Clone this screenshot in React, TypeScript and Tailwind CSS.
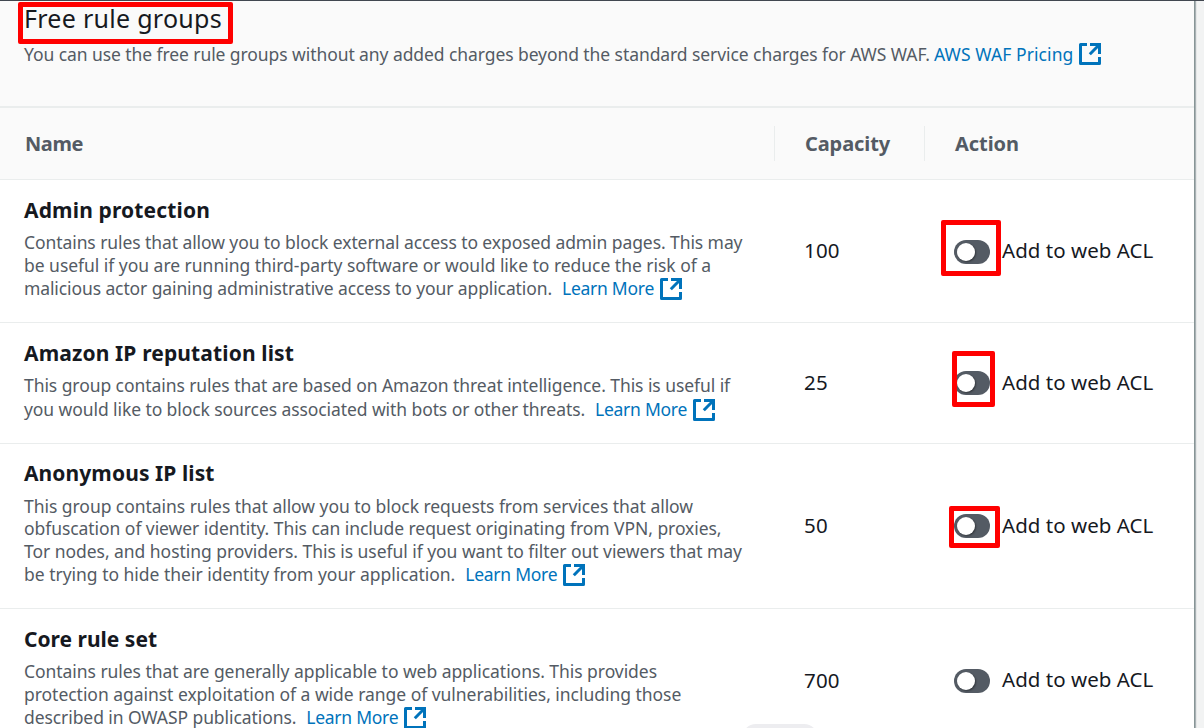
type TextLine = { text: string; className: string };

type RuleGroup = {
  name: string;
  nameClass: string;
  lines: TextLine[];
  linesClass: string;
  capacity: string;
  rowClass: string;
  toggleClass?: string;
  highlight?: string;
};

const groups: RuleGroup[] = [
  {
    name: "Admin protection",
    nameClass: "pt-4 tracking-[0.145px]",
    lines: [
      { text: "Contains rules that allow you to block external access to exposed admin pages. This may", className: "tracking-[-0.081px]" },
      { text: "be useful if you are running third-party software or would like to reduce the risk of a", className: "tracking-[-0.029px]" },
      { text: "malicious actor gaining administrative access to your application.", className: "tracking-[-0.108px]" },
    ],
    linesClass: "mt-[7px] auto-rows-[23px]",
    capacity: "100",
    rowClass: "h-[143px]",
    toggleClass: "mt-px",
    highlight: "-left-[13px] -top-[20px] h-[56px] w-[60px]",
  },
  {
    name: "Amazon IP reputation list",
    nameClass: "pt-4 tracking-[0.129px]",
    lines: [
      { text: "This group contains rules that are based on Amazon threat intelligence. This is useful if", className: "tracking-[-0.067px]" },
      { text: "you would like to block sources associated with bots or other threats.", className: "tracking-[-0.084px]" },
    ],
    linesClass: "mt-[7px] auto-rows-[23px] gap-px",
    capacity: "25",
    rowClass: "h-[121px]",
    highlight: "-left-[2px] -top-[20px] h-[56px] w-[43px]",
  },
  {
    name: "Anonymous IP list",
    nameClass: "pt-[15px] tracking-[0.085px]",
    lines: [
      { text: "This group contains rules that allow you to block requests from services that allow", className: "tracking-[-0.043px]" },
      { text: "obfuscation of viewer identity. This can include request originating from VPN, proxies,", className: "tracking-[-0.06px]" },
      { text: "Tor nodes, and hosting providers. This is useful if you want to filter out viewers that may", className: "tracking-[-0.044px]" },
      { text: "be trying to hide their identity from your application.", className: "tracking-[-0.016px]" },
    ],
    linesClass: "mt-2 grid-rows-[22px_23px_23px_23px]",
    capacity: "50",
    rowClass: "h-[165px]",
    highlight: "-left-[5px] -top-[8px] h-[42px] w-[51px]",
  },
  {
    name: "Core rule set",
    nameClass: "pt-4 tracking-normal",
    lines: [
      { text: "Contains rules that are generally applicable to web applications. This provides", className: "tracking-[-0.052px]" },
      { text: "protection against exploitation of a wide range of vulnerabilities, including those", className: "tracking-[-0.035px]" },
      { text: "described in OWASP publications.", className: "tracking-[-0.08px]" },
    ],
    linesClass: "mt-[7px] auto-rows-[23px]",
    capacity: "700",
    rowClass: "h-[144px]",
    highlight: undefined,
  },
];

function ExternalIcon() {
  return (
    <svg width="22" height="22" viewBox="0 0 22 22" fill="none" stroke="currentColor" strokeWidth="3" className="shrink-0">
      <path d="M8 1.5H1.5V20.5H20.5V14" strokeLinejoin="round" />
      <path d="M11 1.5H20.5V11" />
      <path d="M20 2L10.8 11.2" />
    </svg>
  );
}

function LearnMore() {
  return (
    <a className="ml-[10px] flex items-center gap-[6px] text-[#0073bb]">
      <span className="tracking-[-0.266px]">Learn More</span>
      <ExternalIcon />
    </a>
  );
}

function Toggle({ className = "", highlight }: { className?: string; highlight?: string }) {
  return (
    <span className={`relative flex h-6 w-9 shrink-0 items-center rounded-full bg-[#545b64] pl-[3px] ${className}`}>
      <span className="size-[18px] rounded-full bg-white shadow-[1px_1px_2px_rgba(0,0,0,0.4)]" />
      {highlight && <span className={`absolute rounded-[2px] border-5 border-[#ff0000] ${highlight}`} />}
    </span>
  );
}

function Row({ group }: { group: RuleGroup }) {
  return (
    <div className={`flex shrink-0 border-b border-[#eaeded] bg-white ${group.rowClass}`}>
      <div className="w-[774px] shrink-0 pl-6">
        <h3 className={`text-[21px] font-bold leading-7 text-[#16191f] ${group.nameClass}`}>{group.name}</h3>
        <div className={`grid text-[17.5px] leading-[23px] text-[#545b64] ${group.linesClass}`}>
          {group.lines.map((line, i) => (
            <div key={line.text} className="flex items-center whitespace-nowrap">
              <span className={line.className}>{line.text}</span>
              {i === group.lines.length - 1 && <LearnMore />}
            </div>
          ))}
        </div>
      </div>
      <div className="flex w-[180px] shrink-0 items-center pb-px pl-[30px] text-[20.5px] tracking-[0.2px] text-[#16191f]">
        {group.capacity}
      </div>
      <div className="flex items-center gap-3 text-[20.5px] text-[#16191f]">
        <Toggle className={group.toggleClass} highlight={group.highlight} />
        <span className="whitespace-nowrap pb-[2px] tracking-[0.03px]">Add to web ACL</span>
      </div>
    </div>
  );
}

export default function App() {
  return (
    <div className="relative flex h-[728px] w-[1204px] overflow-hidden border-t border-[#414750] bg-[#f2f3f3] font-['Noto_Sans',sans-serif]">
      <main className="flex w-[1195px] shrink-0 flex-col border-r border-[#879596] bg-[#fafafa] shadow-[1px_0_1px_rgba(0,28,36,0.3)]">
        <header className="h-[107px] shrink-0 border-b-2 border-[#eaeded] pl-[18px] pt-px">
          <h2 className="flex h-[42px] w-[215px] rounded-[2px] border-5 border-[#ff0000] pl-px text-[25px] leading-[23px] tracking-[0.284px] whitespace-nowrap text-[#16191f]">
            Free rule groups
          </h2>
          <p className="-mt-px flex h-[22px] items-center whitespace-nowrap pl-[6px] text-[17.5px] leading-[22px] text-[#545b64]">
            <span className="pb-px tracking-[-0.078px]">
              You can use the free rule groups without any added charges beyond the standard service charges for AWS WAF.
            </span>
            <a className="ml-1 flex items-center gap-[6px] text-[#0073bb]">
              <span className="pb-px tracking-[0.092px]">AWS WAF Pricing</span>
              <ExternalIcon />
            </a>
          </p>
        </header>
        <div className="flex h-[72px] shrink-0 items-center border-b border-[#eaeded] text-[20px] font-bold text-[#545b64]">
          <div className="w-[774px] pl-[25px] tracking-[-0.4px]">Name</div>
          <div className="flex h-[35px] w-[150px] items-center border-l border-[#eaeded] pl-[30px] tracking-[-0.1px]">Capacity</div>
          <div className="flex h-[35px] items-center border-l border-[#eaeded] pl-[30px] tracking-[-0.053px]">Action</div>
        </div>
        {groups.map((group) => (
          <Row key={group.name} group={group} />
        ))}
      </main>
      <div className="absolute left-[742px] top-[723px] h-8 w-[76px] rounded-[14px] bg-[#ededf0]" />
    </div>
  );
}
